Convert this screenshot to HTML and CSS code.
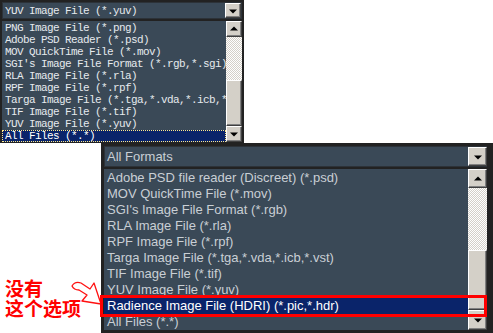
FILE: index.html
```html
<!DOCTYPE html>
<html>
<head>
  <title>File Format Lists</title>
  <link rel="stylesheet" href="styles.css">
</head>
<body>
  <div class="screen">

    <div class="picker picker-old">
      <div class="combo">
        <span class="combo-text">YUV Image File (*.yuv)</span>
        <span class="btn btn-down"></span>
      </div>
      <div class="list">
        <ul class="items">
          <li>PNG Image File (*.png)</li>
          <li>Adobe PSD Reader (*.psd)</li>
          <li>MOV QuickTime File (*.mov)</li>
          <li>SGI's Image File Format (*.rgb,*.sgi)</li>
          <li>RLA Image File (*.rla)</li>
          <li>RPF Image File (*.rpf)</li>
          <li>Targa Image File (*.tga,*.vda,*.icb,*.vst)</li>
          <li>TIF Image File (*.tif)</li>
          <li>YUV Image File (*.yuv)</li>
          <li class="selected focused">All Files (*.*)</li>
        </ul>
        <div class="scrollbar">
          <span class="btn btn-up"></span>
          <span class="track track-top"></span>
          <span class="thumb"></span>
          <span class="btn btn-down"></span>
        </div>
      </div>
    </div>

    <div class="picker picker-new">
      <div class="combo">
        <span class="combo-text">All Formats</span>
        <span class="btn btn-down"></span>
      </div>
      <div class="list">
        <ul class="items">
          <li>Adobe PSD file reader (Discreet) (*.psd)</li>
          <li>MOV QuickTime File (*.mov)</li>
          <li>SGI's Image File Format (*.rgb)</li>
          <li>RLA Image File (*.rla)</li>
          <li>RPF Image File (*.rpf)</li>
          <li>Targa Image File (*.tga,*.vda,*.icb,*.vst)</li>
          <li>TIF Image File (*.tif)</li>
          <li>YUV Image File (*.yuv)</li>
          <li class="selected">Radience Image File (HDRI) (*.pic,*.hdr)</li>
          <li>All Files (*.*)</li>
        </ul>
        <div class="scrollbar">
          <span class="btn btn-up"></span>
          <span class="track track-top"></span>
          <span class="thumb"></span>
          <span class="btn btn-down"></span>
        </div>
      </div>
    </div>

    <div class="note">
      <span class="note-line">没有</span>
      <span class="note-line">这个选项</span>
    </div>

    <svg class="arrow" width="34" height="30" viewBox="0 0 34 30">
      <path d="M2,7 Q5,2 11,4 L20,10 L24,4 L31,25 L12,22 L17,16 L9,11 Q4,11 2,7 Z"
            fill="#fff" stroke="#ff1010" stroke-width="1.3" stroke-linejoin="round"/>
    </svg>

    <div class="highlight"></div>
  </div>
</body>
</html>
```

FILE: styles.css
```css
body {
  margin: 0;
  background-color: #fff;
}

.screen {
  position: relative;
  width: 493px;
  height: 333px;
  overflow: hidden;
}

/* shared widget parts */

.picker {
  display: flex;
  flex-direction: column;
  background-color: #222;
  box-sizing: border-box;
}

.combo {
  display: flex;
  align-items: center;
  justify-content: space-between;
  background-color: #3a4957;
  box-shadow: inset 0 0 0 1px #2c3238;
}

.list {
  display: flex;
  background-color: #3a4957;
}

.items {
  flex: 1;
  margin: 0;
  padding: 1px 0 0 0;
  list-style: none;
  overflow: hidden;
}

.items li {
  white-space: nowrap;
  overflow: hidden;
}

.items li.selected {
  background-color: #0a246a;
  color: #fff;
}

.scrollbar {
  display: flex;
  flex-direction: column;
}

.btn {
  position: relative;
  display: block;
  box-sizing: border-box;
  background-color: #d4d0c8;
  border-top: 1px solid #fff;
  border-left: 1px solid #fff;
  border-right: 1px solid #404040;
  border-bottom: 1px solid #404040;
  box-shadow: inset -1px -1px 0 #808080;
}

.btn::after {
  content: "";
  position: absolute;
  left: 50%;
  top: 50%;
  width: 0;
  height: 0;
  border-left: 4px solid transparent;
  border-right: 4px solid transparent;
}

.btn-down::after {
  border-top: 4px solid #000;
  transform: translate(-50%, -40%);
}

.btn-up::after {
  border-bottom: 4px solid #000;
  transform: translate(-50%, -60%);
}

.track {
  display: block;
  background-color: #fff;
  background-image: repeating-conic-gradient(#d4d0c8 0 25%, #fff 0 50%);
  background-size: 2px 2px;
}

.thumb {
  display: block;
  box-sizing: border-box;
  background-color: #d4d0c8;
  border-top: 1px solid #fff;
  border-left: 1px solid #fff;
  border-right: 1px solid #404040;
  border-bottom: 1px solid #404040;
  box-shadow: inset -1px -1px 0 #808080;
}

/* old style list, bitmap-like mono text */

.picker-old {
  width: 244px;
  height: 143px;
  padding: 2px 2px 1px 2px;
  gap: 2px;
  font-family: "Liberation Mono", "Courier New", monospace;
  font-size: 11px;
  letter-spacing: -0.6px;
  color: #e6eaee;
}

.picker-old .combo {
  height: 17px;
  padding-left: 3px;
}

.picker-old .combo .btn {
  width: 16px;
  height: 15px;
  margin-right: 1px;
}

.picker-old .list {
  height: 121px;
}

.picker-old .items li {
  height: 12px;
  line-height: 12px;
  padding-left: 3px;
}

.picker-old .items li.focused {
  outline: 1px dotted #ffe98a;
  outline-offset: -1px;
}

.picker-old .scrollbar {
  width: 16px;
}

.picker-old .scrollbar .btn {
  height: 16px;
}

.picker-old .track-top {
  height: 43px;
}

.picker-old .thumb {
  height: 46px;
}

/* newer list, sans text */

.picker-new {
  width: 392px;
  height: 190px;
  margin-left: 101px;
  padding: 3px 6px 3px 3px;
  gap: 2px;
  font-family: "Liberation Sans", Arial, sans-serif;
  font-size: 13px;
  color: #c9cfd5;
}

.picker-new .combo {
  height: 21px;
  padding-left: 3px;
}

.picker-new .combo .btn {
  width: 19px;
  height: 19px;
  margin-right: 0;
}

.picker-new .list {
  height: 161px;
}

.picker-new .items li {
  height: 16px;
  line-height: 16px;
  padding-left: 3px;
}

.picker-new .scrollbar {
  width: 19px;
}

.picker-new .scrollbar .btn-up {
  height: 19px;
}

.picker-new .scrollbar .btn-down {
  height: 20px;
}

.picker-new .track-top {
  height: 62px;
}

.picker-new .thumb {
  height: 60px;
}

/* red annotation on top */

.note {
  position: absolute;
  left: 5px;
  top: 278px;
  display: flex;
  flex-direction: column;
  font-family: "Noto Sans CJK SC", sans-serif;
  font-size: 19px;
  font-weight: 700;
  color: #ff0000;
}

.note-line {
  display: block;
  height: 20px;
  line-height: 20px;
}

.arrow {
  position: absolute;
  left: 70px;
  top: 279px;
}

.highlight {
  position: absolute;
  left: 100px;
  top: 295px;
  width: 387px;
  height: 22px;
  box-sizing: border-box;
  border: 3px solid #ff0000;
}
```
